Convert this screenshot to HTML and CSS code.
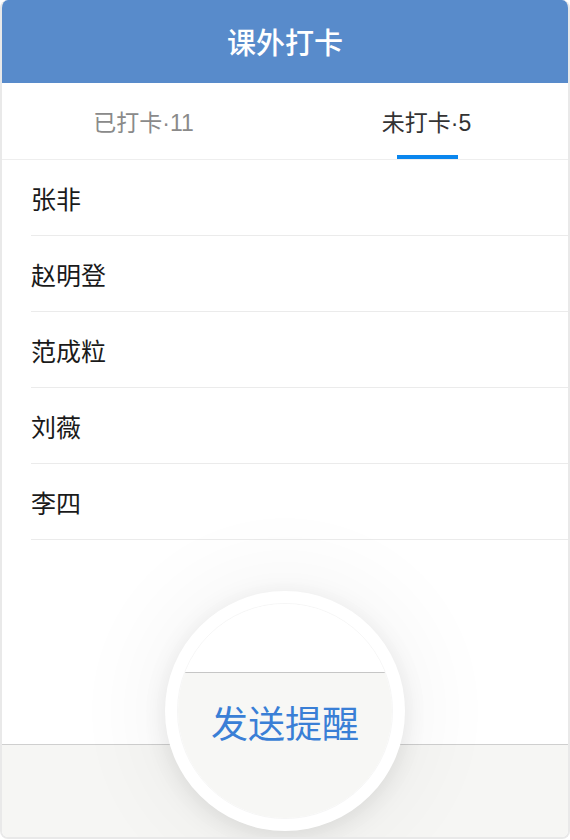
FILE: index.html
```html
<!DOCTYPE html>
<html lang="zh">
<head>
<meta charset="utf-8">
<link rel="stylesheet" href="styles.css">
</head>
<body>
<div class="phone">
  <header class="header">课外打卡</header>
  <nav class="tabs">
    <div class="tab">已打卡·11</div>
    <div class="tab active">未打卡·5</div>
  </nav>
  <ul class="list">
    <li class="row">张非</li>
    <li class="row">赵明登</li>
    <li class="row">范成粒</li>
    <li class="row">刘薇</li>
    <li class="row">李四</li>
  </ul>
  <div class="spacer"></div>
  <footer class="footer"></footer>
  <div class="lens">
    <div class="lens-inner">
      <div class="lens-top"></div>
      <div class="lens-bottom">发送提醒</div>
    </div>
  </div>
</div>
</body>
</html>
```
FILE: styles.css
```css
* { box-sizing: border-box; }
html, body { margin: 0; padding: 0; background: #ffffff; }
body {
  width: 570px;
  height: 840px;
  font-family: "Liberation Sans", "Noto Sans CJK SC", sans-serif;
}
.phone {
  position: relative;
  width: 570px;
  height: 839px;
  border: 2px solid #e9e9e9;
  border-top: none;
  border-radius: 8px;
  overflow: hidden;
  display: flex;
  flex-direction: column;
  background: #ffffff;
}
.header {
  height: 83px;
  flex: none;
  background: #588bcb;
  color: #ffffff;
  font-size: 29px;
  font-weight: 500;
  display: flex;
  align-items: center;
  justify-content: center;
  margin: 0 -2px;
  padding-bottom: 2px;
}
.tabs {
  height: 77px;
  flex: none;
  display: flex;
  border-bottom: 1px solid #eeeeee;
}
.tab {
  flex: 1;
  position: relative;
  display: flex;
  align-items: center;
  justify-content: center;
  font-size: 23px;
  color: #8a8a8a;
}
.tab.active { color: #333333; }
.tab.active::after {
  content: "";
  position: absolute;
  bottom: 0;
  left: 50%;
  width: 61px;
  margin-left: -30px;
  height: 4px;
  background: #0a86ee;
}
.list {
  list-style: none;
  margin: 0;
  padding: 0 0 0 29px;
  flex: none;
}
.row {
  height: 76px;
  border-bottom: 1px solid #ebebeb;
  display: flex;
  align-items: center;
  font-size: 25px;
  color: #1a1a1a;
}
.spacer { flex: 1; }
.footer {
  height: 93px;
  flex: none;
  background: #f6f6f4;
  border-top: 1px solid #cfcfcf;
}
.lens {
  position: absolute;
  left: 163px;
  top: 591px;
  width: 240px;
  height: 240px;
  border-radius: 50%;
  background: #ffffff;
  padding: 12px;
  box-shadow: 0 0 90px 20px rgba(0,0,0,0.045), 0 6px 24px rgba(0,0,0,0.09);
}
.lens-inner {
  width: 216px;
  height: 216px;
  border-radius: 50%;
  overflow: hidden;
  display: flex;
  flex-direction: column;
  border: 1px solid #f6f6f6;
}
.lens-top {
  height: 69px;
  flex: none;
  background: #ffffff;
  border-bottom: 1px solid #c6c6c6;
}
.lens-bottom {
  flex: 1;
  background: #f7f7f5;
  color: #3a7fd6;
  font-size: 37px;
  display: flex;
  justify-content: center;
  padding-top: 31px;
  line-height: 1.2;
}
```
